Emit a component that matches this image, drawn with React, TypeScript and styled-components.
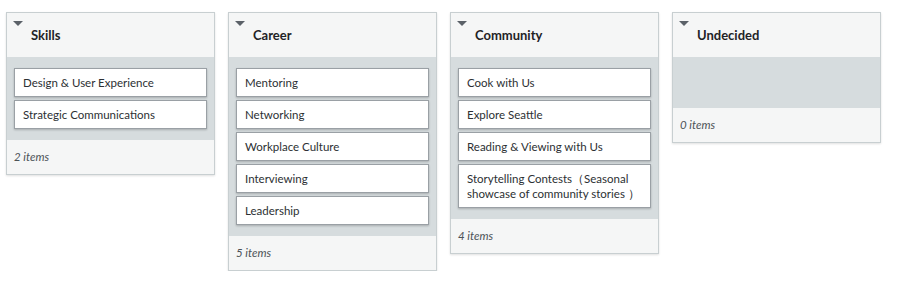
import React from 'react';
import styled, { createGlobalStyle } from 'styled-components';

const GlobalStyle = createGlobalStyle`
    body {
        margin: 0;
        background: #ffffff;
        font-family: "Lato", "Open Sans", sans-serif;
    }
`;

const Board = styled.div`
    display: flex;
    align-items: flex-start;
    gap: 13px;
    padding: 12px 0 0 6px;
`;

const Column = styled.div`
    width: 209px;
    box-sizing: border-box;
    border: 1px solid #c8cfd1;
    background: #f5f6f6;
    box-shadow: 0 1px 2px rgba(0, 0, 0, 0.12);
`;

const Header = styled.div`
    height: 44px;
    box-sizing: border-box;
    padding: 8px 8px 0 6px;
    display: flex;
    flex-direction: column;
`;

const Caret = styled.span`
    width: 0;
    height: 0;
    border-left: 5px solid transparent;
    border-right: 5px solid transparent;
    border-top: 5px solid #5b6168;
`;

const Title = styled.h3`
    margin: 1px 0 0 18px;
    font-size: 13px;
    font-weight: 700;
    color: #1f2326;
    line-height: 16px;
`;

const Body = styled.div`
    background: #d6dcde;
    padding: 11px 7px;
    display: flex;
    flex-direction: column;
    gap: 3px;
    min-height: 29px;
`;

const Card = styled.div`
    background: #ffffff;
    border: 1px solid #9aa0a5;
    box-shadow: 0 1px 2px rgba(0, 0, 0, 0.22);
    padding: 6px 8px;
    font-size: 11.5px;
    line-height: 15px;
    color: #2c3033;
`;

const Footer = styled.div`
    height: 34px;
    box-sizing: border-box;
    padding: 0 7px 2px;
    display: flex;
    align-items: center;
    font-size: 11.5px;
    font-style: italic;
    color: #4c5256;
`;

interface Group {
    title: string;
    items: string[];
}

const groups: Group[] = [
    { title: 'Skills', items: ['Design & User Experience', 'Strategic Communications'] },
    { title: 'Career', items: ['Mentoring', 'Networking', 'Workplace Culture', 'Interviewing', 'Leadership'] },
    {
        title: 'Community',
        items: [
            'Cook with Us',
            'Explore Seattle',
            'Reading & Viewing with Us',
            'Storytelling Contests（Seasonal showcase of community stories ）',
        ],
    },
    { title: 'Undecided', items: [] },
];

export default function App() {
    return (
        <>
            <GlobalStyle />
            <Board>
                {groups.map(group => (
                    <Column key={group.title}>
                        <Header>
                            <Caret />
                            <Title>{group.title}</Title>
                        </Header>
                        <Body>
                            {group.items.map(item => (
                                <Card key={item}>{item}</Card>
                            ))}
                        </Body>
                        <Footer>{group.items.length} items</Footer>
                    </Column>
                ))}
            </Board>
        </>
    );
}
